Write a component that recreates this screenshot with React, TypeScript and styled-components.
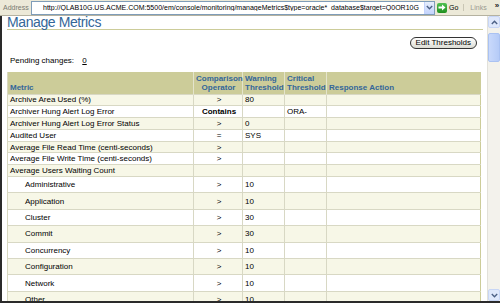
import React from "react";
import styled, { createGlobalStyle } from "styled-components";

const GlobalStyle = createGlobalStyle`
  html, body { margin: 0; padding: 0; background: #ffffff; }
  body { font-family: "Liberation Sans", Arial, sans-serif; overflow: hidden; }
  * { box-sizing: border-box; }
`;

const Frame = styled.div`
  width: 500px;
  height: 303px;
  display: flex;
  flex-direction: column;
  overflow: hidden;
  background: #ffffff;
`;

const AddressBar = styled.div`
  height: 16px;
  flex: none;
  display: flex;
  align-items: center;
  background: #ece9d8;
  border-bottom: 1px solid #b5b2a0;
  padding-left: 3px;
  font-size: 7px;
  white-space: nowrap;
`;

const AddressLabel = styled.span`
  color: #7a7a70;
  width: 28px;
  flex: none;
`;

const UrlField = styled.div`
  flex: none;
  width: 404px;
  height: 14px;
  display: flex;
  align-items: center;
  background: #ffffff;
  border: 1px solid #7f9db9;
  padding-left: 11px;
  color: #000000;
  font-size: 7px;
  white-space: nowrap;
  overflow: hidden;
`;

const UrlText = styled.span`
  flex: 1;
  overflow: hidden;
`;

const DropButton = styled.span`
  flex: none;
  width: 10px;
  height: 12px;
  display: flex;
  align-items: center;
  justify-content: center;
  background: linear-gradient(#e6eefc, #c3d3fd);
  border-left: 1px solid #c3d3fd;
`;

const GoGroup = styled.div`
  flex: none;
  display: flex;
  align-items: center;
  margin-left: 2px;
  gap: 2px;
  color: #000;
  font-size: 7px;
`;

const GoIcon = styled.span`
  width: 10px;
  height: 10px;
  border-radius: 2px;
  background: linear-gradient(#52c152, #1f8f1f);
  display: flex;
  align-items: center;
  justify-content: center;
`;

const LinksGroup = styled.div`
  flex: none;
  margin-left: 5px;
  display: flex;
  align-items: center;
  gap: 8px;
  color: #9a9a90;
  font-size: 7px;
  border-left: 1px solid #c9c6b4;
  padding-left: 6px;
`;

const Chevrons = styled.span`
  color: #222;
  font-weight: bold;
  font-size: 8px;
  line-height: 8px;
  margin-top: -3px;
`;

const Body = styled.div`
  flex: 1;
  display: flex;
  min-height: 0;
  border-left: 2px solid #2a2a2a;
  border-bottom: 2px solid #2a2a2a;
`;

const Page = styled.div`
  flex: 1;
  min-width: 0;
  padding: 0 4px 0 5px;
  overflow: hidden;
`;

const Title = styled.h1`
  margin: 0;
  font-weight: normal;
  font-size: 14px;
  letter-spacing: -0.4px;
  line-height: 13px;
  height: 14px;
  color: #336699;
  border-bottom: 1px solid #cccc99;
`;

const ButtonRow = styled.div`
  display: flex;
  justify-content: flex-end;
  padding: 7px 6px 0 0;
`;

const PillButton = styled.button`
  font-family: "Liberation Sans", Arial, sans-serif;
  font-size: 8px;
  line-height: 10px;
  height: 12px;
  padding: 0 5px;
  border: 1px solid #333;
  border-radius: 6px;
  background: linear-gradient(#ffffff, #dcdcd4);
  color: #000;
  cursor: pointer;
`;

const Pending = styled.div`
  padding: 6px 0 0 3px;
  font-size: 8px;
  line-height: 11px;
  height: 23px;
  color: #000;
`;

const PendingCount = styled.span`
  margin-left: 6px;
  text-decoration: underline;
`;

const Table = styled.table`
  width: 474px;
  border-collapse: collapse;
  table-layout: fixed;
  font-size: 8px;
  border-right: 1px solid #cccc99;
  border-left: 1px solid #d8d8c0;
`;

const HeadCell = styled.th<{ $align?: string }>`
  background: #cccc99;
  color: #336699;
  font-weight: bold;
  font-size: 8px;
  line-height: 9.5px;
  height: 22px;
  padding: 0 1px 1px 2px;
  vertical-align: bottom;
  text-align: ${(p) => p.$align || "left"};
  border-left: 1px solid #e4e4cc;
  white-space: nowrap;
  &:first-child { border-left: none; }
`;

const Row = styled.tr<{ $shade: boolean; $sub?: boolean }>`
  background: ${(p) => (p.$shade ? "#f7f7e7" : "#ffffff")};
  height: ${(p) => (p.$sub ? "16.4px" : "11.8px")};
`;

const Cell = styled.td<{ $align?: string; $indent?: boolean; $bold?: boolean }>`
  padding: 0 0 0 ${(p) => (p.$indent ? "17px" : "2px")};
  text-align: ${(p) => p.$align || "left"};
  font-weight: ${(p) => (p.$bold ? "bold" : "normal")};
  border-top: 1px solid #d8d8c4;
  border-left: 1px solid #d8d8c4;
  white-space: nowrap;
  overflow: hidden;
  line-height: 9px;
  color: #000;
  &:first-child { border-left: none; }
`;

const Scrollbar = styled.div`
  width: 13px;
  flex: none;
  display: flex;
  flex-direction: column;
  background: #f3f2ec;
  border-left: 1px solid #e2e1da;
`;

const ScrollArrow = styled.div`
  height: 12px;
  flex: none;
  display: flex;
  align-items: center;
  justify-content: center;
  background: #dfe8fb;
  border: 1px solid #c8d6f5;
  border-radius: 2px;
`;

const ScrollThumb = styled.div`
  margin-top: 5px;
  height: 29px;
  flex: none;
  background: linear-gradient(90deg, #c9d9fb, #b5cbf7);
  border: 1px solid #aac2f2;
  border-radius: 2px;
`;

const ScrollTrack = styled.div`
  flex: 1;
`;

type MetricRow = {
  name: string;
  op: string;
  warn?: string;
  crit?: string;
  bold?: boolean;
  sub?: boolean;
};

const rows: MetricRow[] = [
  { name: "Archive Area Used (%)", op: ">", warn: "80" },
  { name: "Archiver Hung Alert Log Error", op: "Contains", crit: "ORA-", bold: true },
  { name: "Archiver Hung Alert Log Error Status", op: ">", warn: "0" },
  { name: "Audited User", op: "=", warn: "SYS" },
  { name: "Average File Read Time (centi-seconds)", op: ">" },
  { name: "Average File Write Time (centi-seconds)", op: ">" },
  { name: "Average Users Waiting Count", op: "" },
  { name: "Administrative", op: ">", warn: "10", sub: true },
  { name: "Application", op: ">", warn: "10", sub: true },
  { name: "Cluster", op: ">", warn: "30", sub: true },
  { name: "Commit", op: ">", warn: "30", sub: true },
  { name: "Concurrency", op: ">", warn: "10", sub: true },
  { name: "Configuration", op: ">", warn: "10", sub: true },
  { name: "Network", op: ">", warn: "10", sub: true },
  { name: "Other", op: ">", warn: "10", sub: true },
];

const Chevron = ({ up, color }: { up?: boolean; color: string }) => (
  <svg width="7" height="5" viewBox="0 0 7 5">
    <path
      d={up ? "M0.8 4 L3.5 1.3 L6.2 4" : "M0.8 1 L3.5 3.7 L6.2 1"}
      fill="none"
      stroke={color}
      strokeWidth="1.4"
    />
  </svg>
);

export default function App() {
  return (
    <>
      <GlobalStyle />
      <Frame>
        <AddressBar>
          <AddressLabel>Address</AddressLabel>
          <UrlField>
            <UrlText>
              http://QLAB10G.US.ACME.COM:5500/em/console/monitoring/manageMetrics$type=oracle*_database$target=Q0OR10G
            </UrlText>
            <DropButton>
              <Chevron color="#4d6185" />
            </DropButton>
          </UrlField>
          <GoGroup>
            <GoIcon>
              <svg width="8" height="7" viewBox="0 0 8 7">
                <path d="M0.5 2.5 H4 V0.5 L7.5 3.5 L4 6.5 V4.5 H0.5 Z" fill="#ffffff" />
              </svg>
            </GoIcon>
            <span>Go</span>
          </GoGroup>
          <LinksGroup>
            <span>Links</span>
            <Chevrons>»</Chevrons>
          </LinksGroup>
        </AddressBar>
        <Body>
          <Page>
            <Title>Manage Metrics</Title>
            <ButtonRow>
              <PillButton>Edit Thresholds</PillButton>
            </ButtonRow>
            <Pending>
              Pending changes: <PendingCount>0</PendingCount>
            </Pending>
            <Table>
              <colgroup>
                <col style={{ width: 186 }} />
                <col style={{ width: 49 }} />
                <col style={{ width: 42 }} />
                <col style={{ width: 42 }} />
                <col />
              </colgroup>
              <thead>
                <tr>
                  <HeadCell>Metric</HeadCell>
                  <HeadCell $align="center">
                    Comparison
                    <br />
                    Operator
                  </HeadCell>
                  <HeadCell>
                    Warning
                    <br />
                    Threshold
                  </HeadCell>
                  <HeadCell>
                    Critical
                    <br />
                    Threshold
                  </HeadCell>
                  <HeadCell>Response Action</HeadCell>
                </tr>
              </thead>
              <tbody>
                {rows.map((r, i) => (
                  <Row key={r.name} $shade={i % 2 === 0} $sub={r.sub}>
                    <Cell $indent={r.sub}>{r.name}</Cell>
                    <Cell $align="center" $bold={r.bold}>
                      {r.op}
                    </Cell>
                    <Cell>{r.warn}</Cell>
                    <Cell>{r.crit}</Cell>
                    <Cell />
                  </Row>
                ))}
              </tbody>
            </Table>
          </Page>
          <Scrollbar>
            <ScrollArrow>
              <Chevron up color="#4d6185" />
            </ScrollArrow>
            <ScrollThumb />
            <ScrollTrack />
            <ScrollArrow>
              <Chevron color="#4d6185" />
            </ScrollArrow>
          </Scrollbar>
        </Body>
      </Frame>
    </>
  );
}
